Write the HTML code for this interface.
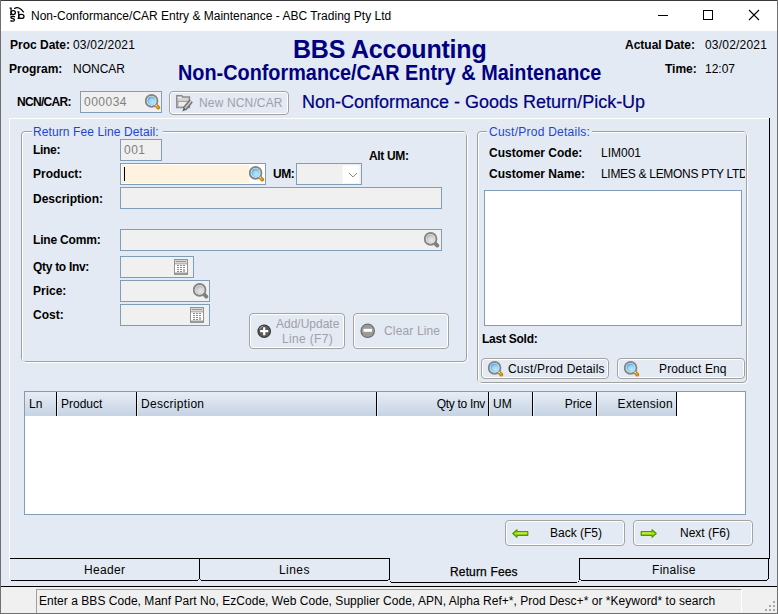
<!DOCTYPE html>
<html><head><meta charset="utf-8">
<style>
*{margin:0;padding:0;box-sizing:border-box}
html,body{width:778px;height:614px;overflow:hidden;background:#e3eaf3;font-family:"Liberation Sans",sans-serif;font-size:12px;color:#000}
.a{position:absolute}
.t{position:absolute;white-space:nowrap;line-height:12px;font-size:12px}
.b{font-weight:bold}
.fld{position:absolute;border:1px solid #7f9db9;background:#f0f0f0}
.btn{position:absolute;border:1px solid #a3a3a3;border-radius:4px;box-shadow:inset 0 0 0 1px #fff;background:#e3eaf3}
.hl{position:absolute;background:#000}
</style></head><body>
<svg width="0" height="0" style="position:absolute">
<defs>
 <radialGradient id="gb" cx="0.6" cy="0.65" r="0.7"><stop offset="0" stop-color="#b8ecfc"/><stop offset="0.6" stop-color="#8fd0f4"/><stop offset="1" stop-color="#3d98e4"/></radialGradient>
 <radialGradient id="gg" cx="0.6" cy="0.65" r="0.7"><stop offset="0" stop-color="#e8e8e8"/><stop offset="0.6" stop-color="#d0d0d0"/><stop offset="1" stop-color="#a8a8a8"/></radialGradient>
 <symbol id="mag" viewBox="0 0 16 16">
  <path d="M11.3 11.5L13.3 13.6" stroke="#c8860f" stroke-width="3.8" stroke-linecap="round"/>
  <circle cx="12.6" cy="12.9" r="1" fill="#f7a412"/>
  <circle cx="6.6" cy="6.9" r="6.8" fill="#868686"/>
  <circle cx="6.6" cy="6.9" r="4.9" fill="#fbfbfb"/>
  <circle cx="6.6" cy="6.9" r="4.3" fill="url(#gb)"/>
  <circle cx="11.2" cy="11.4" r="0.8" fill="#dde6ee"/>
 </symbol>
 <symbol id="magg" viewBox="0 0 16 16">
  <path d="M11.3 11.5L13.3 13.6" stroke="#7e7e7e" stroke-width="3.8" stroke-linecap="round"/>
  <circle cx="6.6" cy="6.9" r="6.8" fill="#848484"/>
  <circle cx="6.6" cy="6.9" r="4.9" fill="#f6f6f6"/>
  <circle cx="6.6" cy="6.9" r="4.3" fill="url(#gg)"/>
 </symbol>
 <symbol id="calc" viewBox="0 0 14 16">
  <rect x="0.5" y="0.5" width="13" height="15" fill="#fff" stroke="#939393"/>
  <rect x="1" y="1" width="12" height="3.5" fill="#d4d4d4"/>
  <rect x="2" y="2" width="10" height="1" fill="#9a9a9a"/>
  <rect x="1" y="4.5" width="12" height="0.8" fill="#8a8a8a"/>
  <rect x="1" y="13.5" width="12" height="2" fill="#9a9a9a"/>
  <g fill="#8a8a8a"><rect x="3" y="6" width="2" height="1"/><rect x="6" y="6" width="2" height="1"/><rect x="9" y="6" width="2" height="1"/>
  <rect x="3" y="8" width="2" height="1"/><rect x="6" y="8" width="2" height="1"/><rect x="9" y="8" width="2" height="1"/>
  <rect x="3" y="10" width="2" height="1"/><rect x="6" y="10" width="2" height="1"/><rect x="9" y="10" width="2" height="3" fill="#b0b0b0"/>
  <rect x="3" y="12" width="2" height="1"/><rect x="6" y="12" width="2" height="1"/></g>
 </symbol>
 <symbol id="arrow" viewBox="0 0 17 9">
  <path d="M0.8 4.5L5 0.8V2.7H15.8V6.3H5V8.2Z" fill="#a6dc18" stroke="#4a9a00" stroke-width="1.2" stroke-linejoin="round"/>
  <path d="M5.5 4H15" stroke="#d8f070" stroke-width="1"/>
 </symbol>
</defs></svg>
<!-- window frame -->
<div class="a" style="left:0;top:0;width:778px;height:1px;background:#3a3a3a"></div>
<div class="a" style="left:0;top:0;width:1px;height:614px;background:#707070"></div>
<div class="a" style="left:777px;top:0;width:1px;height:614px;background:#707070"></div>
<div class="a" style="left:0;top:613px;width:778px;height:1px;background:#707070"></div>
<!-- title bar -->
<div class="a" style="left:1px;top:1px;width:776px;height:30px;background:#fff"></div>
<svg class="a" style="left:0px;top:0px" width="30" height="30" viewBox="0 0 30 30">
 <g fill="none" stroke="#000" stroke-width="1.25">
  <path d="M9.6 8H11.1V14.6H10"/>
  <ellipse cx="13.2" cy="12.6" rx="2.2" ry="2"/>
  <path d="M15 16.9Q13.2 16 11.4 16.6Q10.2 17.3 11.6 18.2L13.6 18.9Q15.3 19.8 13.9 20.8Q12 21.6 10.4 20.6"/>
  <path d="M17.3 11.8H18.7V18.4H17.6"/>
  <ellipse cx="21.3" cy="16.4" rx="2.7" ry="2"/>
  <path d="M14.2 8.8Q18.8 5.4 23.8 12.3"/>
 </g>
</svg>
<div class="t" style="left:31px;top:10px">Non-Conformance/CAR Entry &amp; Maintenance - ABC Trading Pty Ltd</div>
<div class="a" style="left:658px;top:15px;width:10px;height:1px;background:#000"></div>
<div class="a" style="left:703px;top:10px;width:10px;height:10px;border:1px solid #000"></div>
<svg class="a" style="left:748px;top:9px" width="12" height="12" viewBox="0 0 12 12"><path d="M1 1L11 11M11 1L1 11" stroke="#000" stroke-width="1.1"/></svg>

<!-- header -->
<div class="t b" style="left:10px;top:39px">Proc Date:</div>
<div class="t" style="left:73px;top:39px;letter-spacing:0.2px">03/02/2021</div>
<div class="t b" style="left:9px;top:63px">Program:</div>
<div class="t" style="left:73px;top:63px">NONCAR</div>
<div class="t b" style="left:625px;top:39px">Actual Date:</div>
<div class="t" style="left:705px;top:39px;letter-spacing:0.2px">03/02/2021</div>
<div class="t b" style="left:665px;top:63px">Time:</div>
<div class="t" style="left:705px;top:63px">12:07</div>
<div class="t b" style="left:293px;top:37px;font-size:25px;line-height:25px;letter-spacing:-0.2px;color:#000080">BBS Accounting</div>
<div class="t b" style="left:178px;top:63px;font-size:21.5px;line-height:20px;transform:scaleX(0.923);transform-origin:0 0;color:#000080">Non-Conformance/CAR Entry &amp; Maintenance</div>

<!-- NCN row -->
<div class="t b" style="left:17px;top:96px;letter-spacing:-0.7px">NCN/CAR:</div>
<div class="fld" style="left:80px;top:91px;width:82px;height:22px"></div>
<div class="t" style="left:84px;top:96px;color:#808080;letter-spacing:0.5px">000034</div>
<div class="btn" style="left:169px;top:91px;width:120px;height:24px"></div>
<div class="t" style="left:199px;top:97px;color:#a0a0a8;letter-spacing:0.15px">New NCN/CAR</div>
<div class="t" style="left:302px;top:93px;font-size:18px;line-height:18px;color:#000080;-webkit-text-stroke:0.2px #000080">Non-Conformance - Goods Return/Pick-Up</div>

<!-- panel -->
<div class="a" style="left:9px;top:118px;width:761px;height:1px;background:#fff"></div>
<div class="a" style="left:9px;top:118px;width:1px;height:461px;background:#fff"></div>
<div class="a" style="left:769px;top:118px;width:1px;height:441px;background:#000"></div>


<!-- group box 1 -->
<div class="a" style="left:21px;top:131px;width:446px;height:231px;border:1px solid #a0a0a0;border-radius:4px"></div>
<div class="a" style="left:22px;top:132px;width:446px;height:231px;border:1px solid #fff;border-radius:4px"></div>
<div class="a" style="left:32px;top:126px;width:131px;height:10px;background:#e3eaf3"></div>
<div class="t" style="left:33px;top:126px;letter-spacing:0.1px;color:#1d44d8">Return Fee Line Detail:</div>
<div class="t b" style="left:33px;top:144px;letter-spacing:-0.3px">Line:</div>
<div class="t b" style="left:33px;top:168px">Product:</div>
<div class="t b" style="left:33px;top:193px">Description:</div>
<div class="t b" style="left:33px;top:234px;letter-spacing:-0.19px">Line Comm:</div>
<div class="t b" style="left:33px;top:261px;letter-spacing:-0.3px">Qty to Inv:</div>
<div class="t b" style="left:33px;top:285px">Price:</div>
<div class="t b" style="left:33px;top:309px">Cost:</div>
<div class="t b" style="left:273px;top:168px;letter-spacing:-0.5px">UM:</div>
<div class="t b" style="left:369px;top:150px;letter-spacing:-0.35px">Alt UM:</div>
<div class="fld" style="left:120px;top:139px;width:42px;height:22px"></div>
<div class="t" style="left:124px;top:144px;color:#808080;letter-spacing:0.5px">001</div>
<div class="fld" style="left:120px;top:163px;width:146px;height:22px;background:#fff"></div>
<div class="a" style="left:122px;top:165px;width:127px;height:18px;background:#fff3df"></div>
<div class="a" style="left:124px;top:167px;width:1px;height:14px;background:#000"></div>
<div class="fld" style="left:296px;top:163px;width:66px;height:22px"></div>
<div class="a" style="left:342px;top:165px;width:18px;height:19px;background:#f8f6f2"></div>
<div class="a" style="left:343px;top:166px;width:16px;height:17px;background:#fff"></div>
<svg class="a" style="left:348px;top:172px" width="10" height="6" viewBox="0 0 10 6"><path d="M1 1L5 5L9 1" fill="none" stroke="#8c8c8c" stroke-width="1"/></svg>
<div class="fld" style="left:120px;top:187px;width:322px;height:22px"></div>
<div class="fld" style="left:120px;top:229px;width:322px;height:22px"></div>
<div class="fld" style="left:120px;top:256px;width:74px;height:22px"></div>
<div class="fld" style="left:120px;top:280px;width:90px;height:22px"></div>
<div class="fld" style="left:120px;top:304px;width:90px;height:22px"></div>
<div class="btn" style="left:249px;top:313px;width:96px;height:36px"></div>
<div class="t" style="left:276px;top:318px;color:#a0a0a8">Add/Update</div>
<div class="t" style="left:282px;top:333px;color:#a0a0a8;letter-spacing:0.35px">Line (F7)</div>
<div class="btn" style="left:353px;top:313px;width:96px;height:36px"></div>
<div class="t" style="left:384px;top:325px;color:#a0a0a8;letter-spacing:0.15px">Clear Line</div>

<!-- group box 2 -->
<div class="a" style="left:477px;top:131px;width:270px;height:252px;border:1px solid #a0a0a0;border-radius:4px"></div>
<div class="a" style="left:478px;top:132px;width:270px;height:252px;border:1px solid #fff;border-radius:4px"></div>
<div class="a" style="left:487px;top:126px;width:105px;height:10px;background:#e3eaf3"></div>
<div class="t" style="left:489px;top:126px;letter-spacing:0.25px;color:#1d44d8">Cust/Prod Details:</div>
<div class="t b" style="left:489px;top:147px">Customer Code:</div>
<div class="t" style="left:601px;top:147px">LIM001</div>
<div class="t b" style="left:489px;top:168px">Customer Name:</div>
<div class="a" style="left:601px;top:160px;width:144px;height:20px;overflow:hidden"><div class="t" style="left:0;top:8px;letter-spacing:-0.3px">LIMES &amp; LEMONS PTY LTD</div></div>
<div class="a" style="left:484px;top:190px;width:258px;height:136px;border:1px solid #7f9db9;background:#fff"></div>
<div class="t b" style="left:482px;top:333px;letter-spacing:-0.25px">Last Sold:</div>
<div class="btn" style="left:481px;top:358px;width:128px;height:21px"></div>
<div class="t" style="left:508px;top:363px;letter-spacing:0.2px">Cust/Prod Details</div>
<div class="btn" style="left:617px;top:358px;width:128px;height:21px"></div>
<div class="t" style="left:659px;top:363px;letter-spacing:0.15px">Product Enq</div>

<!-- grid -->
<div class="a" style="left:24px;top:391px;width:722px;height:124px;border:1px solid #7f9db9;background:#fff"></div>
<div class="a" style="left:25px;top:392px;width:651px;height:24px;background:linear-gradient(#e6edf6,#c6d3e3)"></div>
<div class="hl" style="left:56px;top:392px;width:1px;height:24px"></div>
<div class="a" style="left:57px;top:392px;width:1px;height:24px;background:rgba(255,255,255,0.55)"></div>
<div class="hl" style="left:136px;top:392px;width:1px;height:24px"></div>
<div class="a" style="left:137px;top:392px;width:1px;height:24px;background:rgba(255,255,255,0.55)"></div>
<div class="hl" style="left:376px;top:392px;width:1px;height:24px"></div>
<div class="a" style="left:377px;top:392px;width:1px;height:24px;background:rgba(255,255,255,0.55)"></div>
<div class="hl" style="left:488px;top:392px;width:1px;height:24px"></div>
<div class="a" style="left:489px;top:392px;width:1px;height:24px;background:rgba(255,255,255,0.55)"></div>
<div class="hl" style="left:532px;top:392px;width:1px;height:24px"></div>
<div class="a" style="left:533px;top:392px;width:1px;height:24px;background:rgba(255,255,255,0.55)"></div>
<div class="hl" style="left:596px;top:392px;width:1px;height:24px"></div>
<div class="a" style="left:597px;top:392px;width:1px;height:24px;background:rgba(255,255,255,0.55)"></div>
<div class="hl" style="left:676px;top:392px;width:1px;height:24px"></div>
<div class="a" style="left:677px;top:392px;width:1px;height:24px;background:rgba(255,255,255,0.55)"></div>
<div class="t" style="left:29px;top:398px">Ln</div>
<div class="t" style="left:61px;top:398px">Product</div>
<div class="t" style="left:141px;top:398px;letter-spacing:0.3px">Description</div>
<div class="t" style="left:376px;top:398px;width:109px;text-align:right;letter-spacing:-0.3px">Qty to Inv</div>
<div class="t" style="left:493px;top:398px">UM</div>
<div class="t" style="left:532px;top:398px;width:60px;text-align:right">Price</div>
<div class="t" style="left:596px;top:398px;width:77px;text-align:right;letter-spacing:0.3px">Extension</div>

<!-- nav buttons -->
<div class="btn" style="left:505px;top:520px;width:120px;height:26px"></div>
<div class="t" style="left:550px;top:527px">Back (F5)</div>
<div class="btn" style="left:633px;top:520px;width:120px;height:26px"></div>
<div class="t" style="left:680px;top:527px">Next (F6)</div>

<!-- tabs -->
<div class="hl" style="left:10px;top:558px;width:380px;height:1px"></div>
<div class="hl" style="left:579px;top:558px;width:191px;height:1px"></div>
<div class="hl" style="left:11px;top:580px;width:187px;height:1px"></div>
<div class="hl" style="left:198px;top:579px;width:1px;height:1px;opacity:.7"></div>
<div class="hl" style="left:199px;top:558px;width:1px;height:21px"></div>
<div class="hl" style="left:200px;top:579px;width:1px;height:1px;opacity:.7"></div>
<div class="hl" style="left:201px;top:580px;width:187px;height:1px"></div>
<div class="hl" style="left:388px;top:579px;width:1px;height:1px;opacity:.7"></div>
<div class="hl" style="left:389px;top:558px;width:1px;height:22px"></div>
<div class="hl" style="left:390px;top:581px;width:1px;height:1px"></div>
<div class="hl" style="left:391px;top:582px;width:186px;height:1px"></div>
<div class="hl" style="left:578px;top:581px;width:1px;height:1px"></div>
<div class="hl" style="left:579px;top:558px;width:1px;height:22px"></div>
<div class="hl" style="left:580px;top:579px;width:1px;height:1px;opacity:.7"></div>
<div class="hl" style="left:581px;top:580px;width:186px;height:1px"></div>
<div class="hl" style="left:767px;top:579px;width:1px;height:1px"></div>
<div class="hl" style="left:768px;top:559px;width:1px;height:20px"></div>
<div class="t" style="left:84px;top:564px;letter-spacing:0.35px">Header</div>
<div class="t" style="left:279px;top:564px;letter-spacing:0.45px">Lines</div>
<div class="t" style="left:450px;top:566px;letter-spacing:0.15px;-webkit-text-stroke:0.25px #000">Return Fees</div>
<div class="t" style="left:652px;top:564px;letter-spacing:0.3px">Finalise</div>

<!-- status bar -->
<div class="a" style="left:1px;top:586px;width:776px;height:1px;background:#000"></div>
<div class="a" style="left:1px;top:587px;width:776px;height:26px;background:#f0f0f0"></div>
<div class="a" style="left:36px;top:589px;width:706px;height:24px;border-left:1px solid #a0a0a0;border-top:1px solid #a0a0a0;border-right:1px solid #fff"></div>
<div class="t" style="left:39px;top:595px;letter-spacing:0.035px">Enter a BBS Code, Manf Part No, EzCode, Web Code, Supplier Code, APN, Alpha Ref+*, Prod Desc+* or *Keyword* to search</div>

<svg class="a" style="left:762px;top:600px" width="16" height="13" viewBox="0 0 16 13"><g fill="#a8a8a8">
<rect x="11" y="1" width="2" height="2"/><rect x="7" y="5" width="2" height="2"/><rect x="11" y="5" width="2" height="2"/>
<rect x="3" y="9" width="2" height="2"/><rect x="7" y="9" width="2" height="2"/><rect x="11" y="9" width="2" height="2"/></g></svg>
<!-- icons -->
<svg class="a" style="left:145px;top:94px" width="16" height="16"><use href="#mag"/></svg>
<svg class="a" style="left:249px;top:166px" width="16" height="16"><use href="#mag"/></svg>
<svg class="a" style="left:488px;top:361px" width="16" height="16"><use href="#mag"/></svg>
<svg class="a" style="left:624px;top:361px" width="16" height="16"><use href="#mag"/></svg>
<svg class="a" style="left:424px;top:232px" width="16" height="16"><use href="#magg"/></svg>
<svg class="a" style="left:193px;top:283px" width="16" height="16"><use href="#magg"/></svg>
<svg class="a" style="left:174px;top:259px" width="14" height="16"><use href="#calc"/></svg>
<svg class="a" style="left:190px;top:307px" width="14" height="16"><use href="#calc"/></svg>
<svg class="a" style="left:512px;top:529px" width="17" height="9"><use href="#arrow"/></svg>
<svg class="a" style="left:640px;top:529px" width="17" height="9"><g transform="translate(17,0) scale(-1,1)"><use href="#arrow"/></g></svg>
<svg class="a" style="left:257px;top:324px" width="15" height="15" viewBox="0 0 15 15">
 <circle cx="7.2" cy="7.2" r="6.8" fill="#353535"/><circle cx="7.2" cy="7.2" r="5.8" fill="#5a5a5a"/><path d="M2.6 5.2A5 5 0 0 1 6 2.1" stroke="#a8a8a8" stroke-width="1" fill="none"/>
 <path d="M3.2 7.2H11.2M7.2 3.2V11.2" stroke="#fff" stroke-width="2.2"/>
</svg>
<svg class="a" style="left:360px;top:323px" width="16" height="16" viewBox="0 0 16 16">
 <circle cx="7.7" cy="7.8" r="7.3" fill="#6a6a6a"/><circle cx="7.7" cy="7.8" r="6.2" fill="#9a9a9a"/>
 <path d="M3.5 7.3H12" stroke="#fff" stroke-width="3"/>
</svg>
<svg class="a" style="left:176px;top:95px" width="17" height="17" viewBox="0 0 17 17">
 <path d="M0.8 0.8H5.8L6.8 2H13.4V12.6H0.8Z" fill="#d6d6d6" stroke="#8c8c8c" stroke-width="1.5"/>
 <path d="M1.6 2.4H5.6" stroke="#f0f0f0" stroke-width="1"/>
 <path d="M2 6.4H14.6L10.6 12H1.8Z" fill="#ececec" stroke="#9a9a9a" stroke-width="1"/>
 <path d="M15.2 5.9L8.4 14" stroke="#6e6e6e" stroke-width="4.4"/>
 <path d="M15.2 5.9L8.4 14" stroke="#c4c4c4" stroke-width="1.8"/>
 <path d="M7.8 12.6L6.4 16.4L10.2 14.8Z" fill="#5a5a5a"/>
</svg>
</body></html>
